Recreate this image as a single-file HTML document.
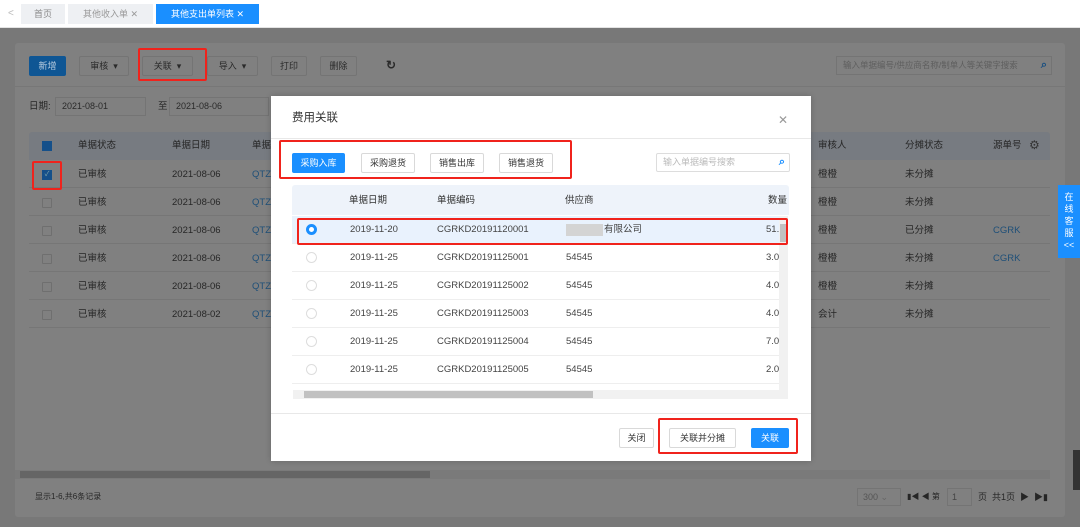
<!DOCTYPE html>
<html><head><meta charset="utf-8"><style>
*{margin:0;padding:0;box-sizing:border-box}
body{width:1080px;height:527px;overflow:hidden;position:relative;background:#787878;font-family:"Liberation Sans","Noto Sans CJK SC",sans-serif;font-size:9px;color:#222}
.a{position:absolute}
.btn{position:absolute;border:1px solid #747474;background:#808080;color:#2a2a2a;font-size:9px;text-align:center;line-height:18px;height:20px;border-radius:2px}
.red{position:absolute;border:2px solid #f0231c;border-radius:2px}
.t{position:absolute;font-size:9.5px;white-space:nowrap;line-height:12px;color:#262626}
.cb{position:absolute;width:10px;height:10px;border:1px solid #6f6f6f;border-radius:1px}
.mb{position:absolute;height:20px;border:1px solid #d9d9d9;background:#fff;border-radius:2px;font-size:9px;line-height:18px;text-align:center;color:#333}
.rad{position:absolute;width:11px;height:11px;border:1px solid #ddd;border-radius:50%;background:#fff}
</style></head><body>
<div class="a" style="left:0;top:0;width:1080px;height:28px;background:#fff;border-bottom:1px solid #e3e3e3"></div>
<div class="t" style="left:8px;top:8px;color:#bbb;font-size:10px">&lt;</div>
<div class="a" style="left:21px;top:4px;width:44px;height:20px;background:#eef0f3;color:#888;text-align:center;line-height:20px;font-size:9px">首页</div>
<div class="a" style="left:68px;top:4px;width:85px;height:20px;background:#eef0f3;color:#999;text-align:center;line-height:20px;font-size:9px">其他收入单 ✕</div>
<div class="a" style="left:156px;top:4px;width:103px;height:20px;background:#1a8fff;color:#fff;text-align:center;line-height:20px;font-size:9px">其他支出单列表 ✕</div>
<div class="a" style="left:15px;top:43px;width:1050px;height:474px;background:#808080;border-radius:3px"></div>
<div class="a" style="left:15px;top:86px;width:1050px;height:1px;background:#777"></div>
<div class="btn" style="left:29px;top:56px;width:37px;background:#0f5694;border-color:#0f5694;color:#b9cde0">新增</div>
<div class="btn" style="left:79px;top:56px;width:50px">审核 &nbsp;▾</div>
<div class="btn" style="left:142px;top:56px;width:51px">关联 &nbsp;▾</div>
<div class="red" style="left:138px;top:48px;width:69px;height:33px"></div>
<div class="btn" style="left:207px;top:56px;width:51px">导入 &nbsp;▾</div>
<div class="btn" style="left:271px;top:56px;width:36px">打印</div>
<div class="btn" style="left:320px;top:56px;width:37px">删除</div>
<div class="t" style="left:386px;top:59px;font-size:12px;font-weight:bold;color:#2a2a2a">↻</div>
<div class="a" style="left:836px;top:56px;width:216px;height:19px;border:1px solid #747474;color:#5e5e5e;font-size:8.5px;line-height:17px;padding-left:6px">输入单据编号/供应商名称/制单人等关键字搜索<span style="position:absolute;right:4px;top:0;color:#1a4f80;font-weight:bold;font-size:11px">⌕</span></div>
<div class="t" style="left:29px;top:101px">日期:</div>
<div class="a" style="left:55px;top:97px;width:91px;height:19px;border:1px solid #747474;line-height:17px;padding-left:6px;font-size:9px;color:#2a2a2a">2021-08-01</div>
<div class="t" style="left:158px;top:101px">至</div>
<div class="a" style="left:169px;top:97px;width:100px;height:19px;border:1px solid #747474;line-height:17px;padding-left:6px;font-size:9px;color:#2a2a2a">2021-08-06</div>
<div class="a" style="left:29px;top:132px;width:1021px;height:28px;background:#777b81;border-radius:3px 3px 0 0"></div>
<div class="a" style="left:42px;top:141px;width:10px;height:10px;background:#15508a"></div>
<div class="t" style="left:78px;top:140px">单据状态</div>
<div class="t" style="left:172px;top:140px">单据日期</div>
<div class="t" style="left:252px;top:140px">单据</div>
<div class="t" style="left:818px;top:140px">审核人</div>
<div class="t" style="left:905px;top:140px">分摊状态</div>
<div class="t" style="left:993px;top:140px">源单号</div>
<div class="t" style="left:1029px;top:139px;font-size:12px;color:#333">⚙</div>
<div id="rows"></div>
<div class="red" style="left:32px;top:161px;width:30px;height:29px"></div>
<div class="a" style="left:15px;top:470px;width:1035px;height:9px;background:#7a7a7a"></div>
<div class="a" style="left:20px;top:471px;width:410px;height:7px;background:#656565"></div>
<div class="t" style="left:35px;top:491px;font-size:8px">显示1-6,共6条记录</div>
<div class="a" style="left:857px;top:488px;width:44px;height:18px;border:1px solid #747474;font-size:9px;line-height:16px;padding-left:5px;color:#555">300 <span style="color:#666">⌄</span></div>
<div class="t" style="left:907px;top:491px;font-size:8px">▮◀ ◀ 第</div>
<div class="a" style="left:947px;top:488px;width:25px;height:18px;border:1px solid #747474;font-size:9px;line-height:16px;padding-left:4px;color:#444">1</div>
<div class="t" style="left:978px;top:491px;font-size:9px">页 &nbsp;共1页 &nbsp;▶ &nbsp;▶▮</div>
<div class="a" style="left:1058px;top:185px;width:22px;height:73px;background:#1a8fff;color:#fff;font-size:9px;text-align:center;line-height:12px;padding-top:6px">在<br>线<br>客<br>服<br>&lt;&lt;</div>
<div class="a" style="left:1073px;top:450px;width:7px;height:40px;background:#333"></div>
<div class="a" style="left:271px;top:96px;width:540px;height:365px;background:#fff;box-shadow:0 0 6px rgba(0,0,0,.2)"></div>
<div class="t" style="left:292px;top:111px;font-size:11.5px;line-height:14px;color:#333">费用关联</div>
<div class="t" style="left:778px;top:114px;font-size:12px;color:#999">✕</div>
<div class="a" style="left:271px;top:138px;width:540px;height:1px;background:#e8e8e8"></div>
<div class="mb" style="left:292px;top:153px;width:53px;background:#1a8fff;border-color:#1a8fff;color:#fff">采购入库</div>
<div class="mb" style="left:361px;top:153px;width:54px">采购退货</div>
<div class="mb" style="left:430px;top:153px;width:54px">销售出库</div>
<div class="mb" style="left:499px;top:153px;width:54px">销售退货</div>
<div class="red" style="left:279px;top:140px;width:293px;height:39px"></div>
<div class="a" style="left:656px;top:153px;width:134px;height:19px;border:1px solid #ddd;border-radius:2px;font-size:9px;color:#bbb;line-height:17px;padding-left:6px">输入单据编号搜索<span style="position:absolute;right:4px;top:0;color:#1a8fff;font-weight:bold;font-size:11px">⌕</span></div>
<div class="a" style="left:292px;top:185px;width:497px;height:214px;background:#fff;border-radius:3px;overflow:hidden">
 <div class="a" style="left:0;top:0;width:497px;height:30px;background:#eef3fa"></div>
</div>
<div class="t" style="left:349px;top:195px;color:#333">单据日期</div>
<div class="t" style="left:437px;top:195px;color:#333">单据编码</div>
<div class="t" style="left:565px;top:195px;color:#333">供应商</div>
<div class="t" style="left:768px;top:195px;color:#333">数量</div>
<div id="mrows"></div>
<div class="a" style="left:779px;top:216px;width:9px;height:174px;background:#f1f1f1"></div>
<div class="a" style="left:780px;top:224px;width:7px;height:18px;background:#c1c1c1"></div>
<div class="a" style="left:293px;top:390px;width:495px;height:9px;background:#f1f1f1"></div>
<div class="a" style="left:304px;top:391px;width:289px;height:7px;background:#c1c1c1"></div>
<div class="red" style="left:297px;top:218px;width:491px;height:27px"></div>
<div class="a" style="left:271px;top:413px;width:540px;height:1px;background:#e8e8e8"></div>
<div class="mb" style="left:619px;top:428px;width:35px">关闭</div>
<div class="mb" style="left:669px;top:428px;width:67px">关联并分摊</div>
<div class="mb" style="left:751px;top:428px;width:38px;background:#1a8fff;border-color:#1a8fff;color:#fff">关联</div>
<div class="red" style="left:658px;top:418px;width:140px;height:36px"></div>
<script>
var h='',r=[['已审核','2021-08-06','未分摊',''],['已审核','2021-08-06','未分摊',''],['已审核','2021-08-06','已分摊','CGRK'],['已审核','2021-08-06','未分摊','CGRK'],['已审核','2021-08-06','未分摊',''],['已审核','2021-08-02','未分摊','']];
r.forEach(function(x,i){var y=160+i*28;
h+='<div class="a" style="left:29px;top:'+(y+27)+'px;width:1021px;height:1px;background:#767676"></div>';
h+=i==0?'<div class="a" style="left:42px;top:'+(y+10)+'px;width:10px;height:10px;background:#15508a;color:#8aa;font-size:7px;text-align:center;line-height:10px">✓</div>':'<div class="cb" style="left:42px;top:'+(y+10)+'px"></div>';
h+='<div class="t" style="left:78px;top:'+(y+9)+'px">'+x[0]+'</div><div class="t" style="left:172px;top:'+(y+9)+'px">'+x[1]+'</div><div class="t" style="left:252px;top:'+(y+9)+'px;color:#1e4f78">QTZ</div>';
h+='<div class="t" style="left:818px;top:'+(y+9)+'px">'+(i==5?'会计':'橙橙')+'</div><div class="t" style="left:905px;top:'+(y+9)+'px">'+x[2]+'</div><div class="t" style="left:993px;top:'+(y+9)+'px;color:#1e4f78">'+x[3]+'</div>';});
document.getElementById('rows').innerHTML=h;
var m='',d=[['2019-11-20','CGRKD20191120001','有限公司','51.0'],['2019-11-25','CGRKD20191125001','54545','3.0'],['2019-11-25','CGRKD20191125002','54545','4.0'],['2019-11-25','CGRKD20191125003','54545','4.0'],['2019-11-25','CGRKD20191125004','54545','7.0'],['2019-11-25','CGRKD20191125005','54545','2.0']];
d.forEach(function(x,i){var y=216+i*28;
m+='<div class="a" style="left:292px;top:'+y+'px;width:487px;height:28px;background:'+(i==0?'#e9f2fd':'#fff')+';border-bottom:1px solid #eee"></div>';
m+=i==0?'<div class="rad" style="left:306px;top:'+(y+8)+'px;border:3px solid #1a8fff;background:#fff"></div>':'<div class="rad" style="left:306px;top:'+(y+8)+'px"></div>';
m+='<div class="t" style="left:350px;top:'+(y+8)+'px;color:#444">'+x[0]+'</div><div class="t" style="left:437px;top:'+(y+8)+'px;color:#444">'+x[1]+'</div>';
m+=(i==0?'<div class="a" style="left:566px;top:'+(y+8)+'px;width:37px;height:12px;background:#d4d4d4"></div><div class="t" style="left:604px;top:'+(y+8)+'px;color:#444">':'<div class="t" style="left:566px;top:'+(y+8)+'px;color:#444">')+x[2]+'</div>';
m+='<div class="t" style="left:766px;top:'+(y+8)+'px;color:#444;width:13px;overflow:hidden">'+x[3]+'</div>';});
document.getElementById('mrows').innerHTML=m;
</script>
</body></html>
